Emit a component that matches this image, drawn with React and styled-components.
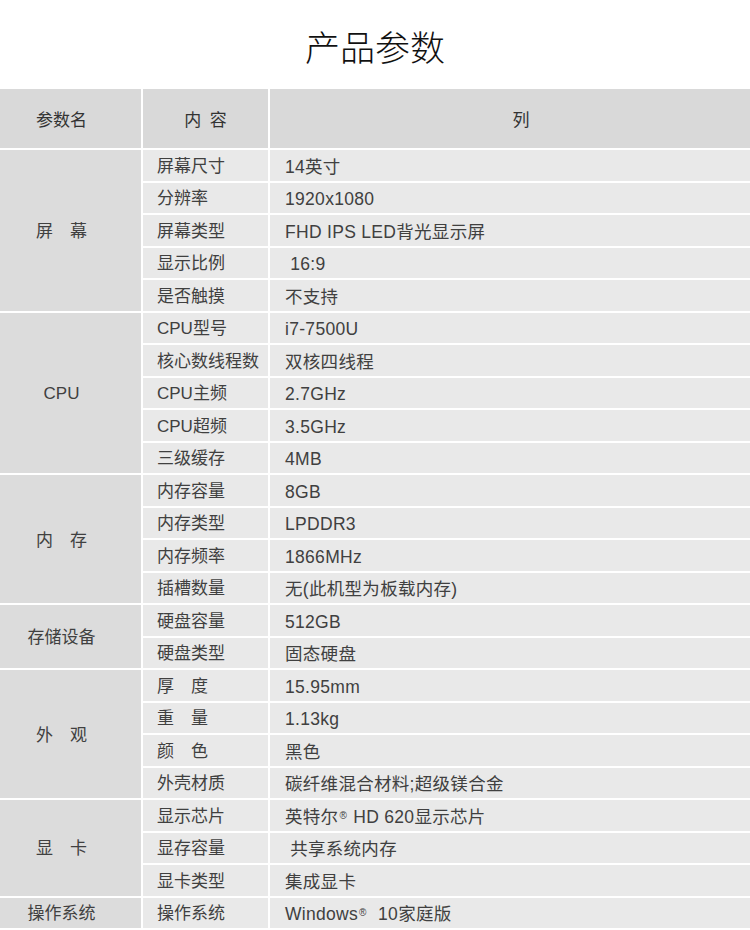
import React from "react";
import styled, { createGlobalStyle } from "styled-components";

const GlobalStyle = createGlobalStyle`
  body {
    margin: 0;
    background: #fff;
    font-family: "Liberation Sans", "Noto Sans CJK SC", sans-serif;
    color: #333;
  }
`;

const Page = styled.div`
  width: 750px;
  overflow: hidden;
`;

const Title = styled.h1`
  margin: 0;
  height: 89px;
  display: flex;
  align-items: center;
  justify-content: center;
  font-family: "Noto Sans CJK SC", sans-serif;
  font-weight: 300;
  font-size: 35px;
  color: #111;
  padding-top: 2px;
  box-sizing: border-box;
`;

const Table = styled.div`
  display: grid;
  grid-template-columns: 141px 125px 1fr;
  grid-template-rows: 59px;
  grid-auto-rows: 30.5px;
  gap: 2px;
  font-size: 17px;
  line-height: 20px;
  color: #404040;
`;

const HeadCell = styled.div`
  background: #d9d9d9;
  display: flex;
  align-items: center;
  justify-content: center;
  padding: ${(p) => p.$pad || "0"};
  color: #333;
  font-family: "Noto Sans CJK SC", sans-serif;
  white-space: pre;
`;

const GroupCell = styled.div`
  grid-row: span ${(p) => p.$span};
  background: #dcdcdc;
  display: flex;
  align-items: center;
  justify-content: center;
  padding-right: 18px;
  padding-top: 3px;
  white-space: pre;
`;

const NameCell = styled.div`
  grid-column: 2;
  background: #e9e9e9;
  display: flex;
  align-items: center;
  padding: 3px 0 0 14px;
  white-space: pre;
`;

const ValueCell = styled.div`
  background: #e9e9e9;
  display: flex;
  align-items: center;
  padding: 3px 0 0 15px;
  white-space: pre;
  font-size: 17.5px;
  letter-spacing: 0.3px;
`;

const Reg = styled.sup`
  font-size: 10px;
  line-height: 0;
  position: relative;
  top: -1px;
  margin: 0 1px;
`;

const groups = [
  {
    name: "屏\u3000幕",
    rows: [
      ["屏幕尺寸", "14英寸"],
      ["分辨率", "1920x1080"],
      ["屏幕类型", "FHD IPS LED背光显示屏"],
      ["显示比例", " 16:9"],
      ["是否触摸", "不支持"],
    ],
  },
  {
    name: "CPU",
    rows: [
      ["CPU型号", "i7-7500U"],
      ["核心数线程数", "双核四线程"],
      ["CPU主频", "2.7GHz"],
      ["CPU超频", "3.5GHz"],
      ["三级缓存", "4MB"],
    ],
  },
  {
    name: "内\u3000存",
    rows: [
      ["内存容量", "8GB"],
      ["内存类型", "LPDDR3"],
      ["内存频率", "1866MHz"],
      ["插槽数量", "无(此机型为板载内存)"],
    ],
  },
  {
    name: "存储设备",
    rows: [
      ["硬盘容量", "512GB"],
      ["硬盘类型", "固态硬盘"],
    ],
  },
  {
    name: "外\u3000观",
    rows: [
      ["厚\u3000度", "15.95mm"],
      ["重\u3000量", "1.13kg"],
      ["颜\u3000色", "黑色"],
      ["外壳材质", "碳纤维混合材料;超级镁合金"],
    ],
  },
  {
    name: "显\u3000卡",
    rows: [
      ["显示芯片", <>英特尔<Reg>®</Reg> HD 620显示芯片</>],
      ["显存容量", " 共享系统内存"],
      ["显卡类型", "集成显卡"],
    ],
  },
  {
    name: "操作系统",
    rows: [["操作系统", <>Windows<Reg>®</Reg>  10家庭版</>]],
  },
];

export default function App() {
  return (
    <Page>
      <GlobalStyle />
      <Title>产品参数</Title>
      <Table>
        <HeadCell $pad="0 18px 0 0">参数名</HeadCell>
        <HeadCell>内{"\u2002"}容</HeadCell>
        <HeadCell $pad="0 0 0 22px">列</HeadCell>
        {groups.map((g) => (
          <React.Fragment key={g.name}>
            <GroupCell $span={g.rows.length}>{g.name}</GroupCell>
            {g.rows.map(([k, v], i) => (
              <React.Fragment key={i}>
                <NameCell>{k}</NameCell>
                <ValueCell>{v}</ValueCell>
              </React.Fragment>
            ))}
          </React.Fragment>
        ))}
      </Table>
    </Page>
  );
}
